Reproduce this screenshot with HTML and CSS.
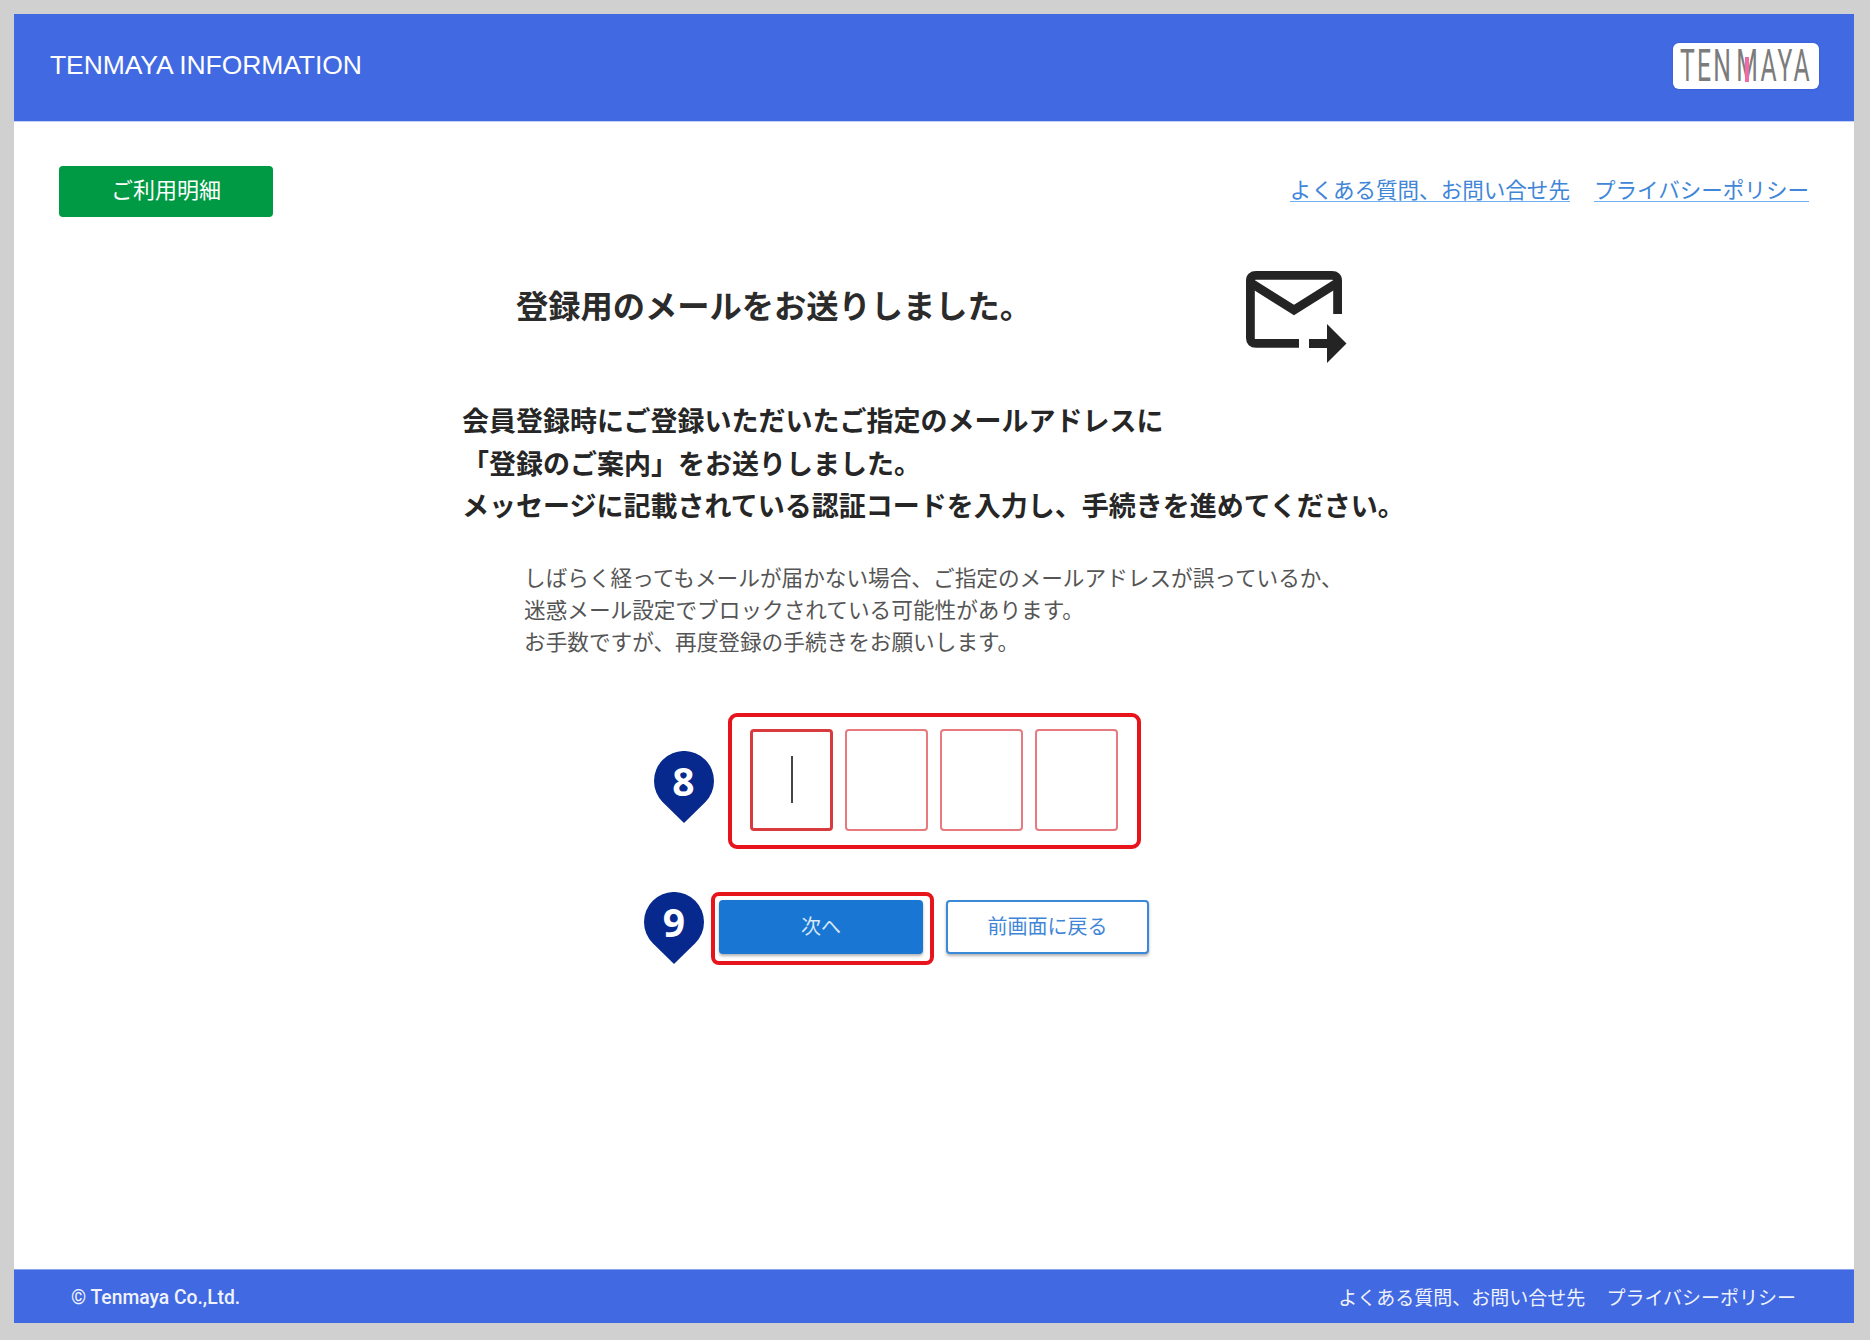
FILE: index.html
```html
<!DOCTYPE html>
<html lang="ja">
<head>
<meta charset="utf-8">
<title>TENMAYA INFORMATION</title>
<link rel="stylesheet" href="styles.css">
</head>
<body>
<div class="page">
  <header class="site-header">
    <div class="site-title">TENMAYA INFORMATION</div>
    <div class="logo"><span class="logo-text">TEN<span class="logo-m">M</span>AYA</span><span class="logo-accent"></span></div>
  </header>
  <main class="main">
    <div class="toolbar">
      <a class="btn-usage">ご利用明細</a>
      <nav class="top-links">
        <a class="top-link">よくある質問、お問い合せ先</a>
        <a class="top-link">プライバシーポリシー</a>
      </nav>
    </div>
    <div class="content">
      <div class="heading-row">
        <h1 class="heading">登録用のメールをお送りしました。</h1>
        <svg class="mail-icon" viewBox="0 0 102 92" aria-hidden="true">
          <path class="mail-stroke" d="M53 72.400H10Q4.400 72.400 4.400 67V9.500Q4.400 4.400 10 4.400H86Q91.600 4.400 91.600 9.500V43"/>
          <path class="mail-stroke" d="M5 12L48 39L91 12"/>
          <path class="mail-fill" d="M63 68H81V53L100.500 72.500L81 92V77H63Z"/>
        </svg>
      </div>
      <div class="lead">
        <p class="lead-line">会員登録時にご登録いただいたご指定のメールアドレスに</p>
        <p class="lead-line">「登録のご案内」をお送りしました。</p>
        <p class="lead-line">メッセージに記載されている認証コードを入力し、手続きを進めてください。</p>
      </div>
      <div class="note">
        <p class="note-line">しばらく経ってもメールが届かない場合、ご指定のメールアドレスが誤っているか、</p>
        <p class="note-line">迷惑メール設定でブロックされている可能性があります。</p>
        <p class="note-line">お手数ですが、再度登録の手続きをお願いします。</p>
      </div>
    </div>
    <div class="code-row">
      <div class="code-frame">
        <div class="pin pin-code">
          <svg class="pin-shape" viewBox="0 0 60 72" aria-hidden="true"><path d="M30 72L8.800 51.200A30 30 0 1 1 51.200 51.200Z"/></svg>
          <span class="pin-num">8</span>
        </div>
        <div class="code-box code-box-active"><span class="caret"></span></div>
        <div class="code-box"></div>
        <div class="code-box"></div>
        <div class="code-box"></div>
      </div>
    </div>
    <div class="actions">
      <div class="next-wrap">
        <div class="pin pin-next">
          <svg class="pin-shape" viewBox="0 0 60 72" aria-hidden="true"><path d="M30 72L8.800 51.200A30 30 0 1 1 51.200 51.200Z"/></svg>
          <span class="pin-num">9</span>
        </div>
        <button class="btn btn-next">次へ</button>
      </div>
      <button class="btn btn-back">前画面に戻る</button>
    </div>
  </main>
  <footer class="site-footer">
    <div class="copyright">© Tenmaya Co.,Ltd.</div>
    <nav class="footer-links">
      <a class="footer-link">よくある質問、お問い合せ先</a>
      <a class="footer-link">プライバシーポリシー</a>
    </nav>
  </footer>
</div>
</body>
</html>
```
FILE: styles.css
```css
* { box-sizing: border-box; }
html, body { margin: 0; height: 100%; }
body {
  background: #d0d0d0;
  font-family: "Noto Sans CJK JP", "Liberation Sans", sans-serif;
  padding: 14px 16px 17px 14px;
  height: 1340px;
  overflow: hidden;
}
p, h1 { margin: 0; }
.page {
  height: 1309px;
  background: #fff;
  display: flex;
  flex-direction: column;
}
.site-header {
  height: 108px;
  flex: none;
  background: #4169e1;
  border-bottom: 1px solid #c5d2f5;
  display: flex;
  align-items: flex-start;
  justify-content: space-between;
  padding: 29px 35px 0 36px;
}
.site-title {
  font-family: "Liberation Sans", Arial, sans-serif;
  font-size: 26.500px;
  line-height: 44px;
  color: #fff;
  letter-spacing: -0.100px;
}
.logo {
  position: relative;
  width: 146px;
  height: 46px;
  background: #fff;
  border-radius: 6px;
  box-shadow: 0 0 2px #2f55d0;
  display: flex;
  justify-content: center;
}
.logo-text {
  flex: none;
  font-family: "Roboto", sans-serif;
  font-weight: 400;
  font-size: 45px;
  line-height: 46px;
  color: #7c7c7c;
  letter-spacing: 4px;
  transform: scaleX(0.55);
  white-space: nowrap;
}
.logo-m { margin-left: 6px; }
.logo-accent {
  position: absolute;
  left: 72px;
  top: 14px;
  width: 4px;
  height: 25px;
  background: #f06aa6;
}
.main {
  flex: 1;
  display: flex;
  flex-direction: column;
}
.toolbar {
  display: flex;
  justify-content: space-between;
  align-items: flex-start;
  padding: 44px 45px 0 45px;
}
.btn-usage {
  width: 214px;
  height: 51px;
  padding-bottom: 8px;
  background: #009a44;
  border-radius: 4px;
  color: #fff;
  font-size: 22px;
  display: flex;
  align-items: center;
  justify-content: center;
}
.top-links { display: flex; gap: 24px; padding-top: 10px; }
.top-link {
  font-size: 21.550px;
  line-height: 25px;
  color: #3f86d8;
  border-bottom: 1px solid #6fb0ee;
}
.content {
  width: 944px;
  margin: 0 auto;
}
.heading-row {
  display: flex;
  align-items: flex-start;
  padding: 54px 0 0 54px;
  height: 182px;
}
.heading {
  width: 730px;
  font-size: 32.250px;
  line-height: 46px;
  font-weight: 700;
  color: #2b2b2b;
  margin-top: 10px;
}
.mail-icon { width: 102px; height: 92px; flex: none; }
.mail-stroke { fill: none; stroke: #242424; stroke-width: 8.800; }
.mail-fill { fill: #242424; }
.lead-line {
  font-size: 27px;
  line-height: 42.500px;
  font-weight: 700;
  color: #262626;
  white-space: nowrap;
}
.note { padding: 34px 0 0 62px; }
.note-line {
  font-size: 21.650px;
  line-height: 32px;
  color: #555;
  white-space: nowrap;
}
.code-row {
  display: flex;
  justify-content: center;
  margin-top: 56px;
}
.code-frame {
  position: relative;
  width: 413px;
  height: 136px;
  border: 4px solid #e8141c;
  border-radius: 9px;
  display: flex;
  gap: 12px;
  padding: 12px 0 0 18px;
}
.code-box {
  width: 83px;
  height: 102px;
  border: 2px solid #e77a7e;
  border-radius: 4px;
  display: flex;
  align-items: center;
  justify-content: center;
}
.code-box-active { border: 3px solid #d83a40; }
.caret { width: 2px; height: 47px; background: #444; margin-left: 2px; }
.pin {
  position: absolute;
  width: 60px;
  height: 72px;
}
.pin-code { left: -78px; top: 34px; }
.pin-next { left: -75px; top: -8px; }
.pin-shape { display: block; width: 60px; height: 72px; fill: #07288c; }
.pin-num {
  position: absolute;
  left: 0;
  top: 0;
  width: 60px;
  height: 60px;
  text-align: center;
  font-family: "Open Sans", sans-serif;
  font-weight: 700;
  font-size: 39px;
  line-height: 60px;
  color: #fff;
}
.actions {
  display: flex;
  justify-content: center;
  gap: 23px;
  margin-top: 51px;
}
.next-wrap { position: relative; width: 204px; height: 54px; }
.next-wrap::after {
  content: "";
  position: absolute;
  inset: -8px -11px -11px -8px;
  border: 4px solid #e8141c;
  border-radius: 8px;
  pointer-events: none;
}
.btn {
  width: 204px;
  height: 54px;
  border-radius: 4px;
  font-family: inherit;
  font-size: 20px;
  padding: 0 0 3px;
  box-shadow: 0 2px 3px rgba(0, 0, 0, 0.3);
}
.btn-next { background: #1976d2; color: #d8e8f8; border: none; }
.btn-back { width: 203px; background: #fff; color: #3f86d8; border: 2px solid #3a8ad8; }
.site-footer {
  height: 54px;
  flex: none;
  background: #4169e1;
  border-top: 1px solid #8aa3ec;
  display: flex;
  align-items: center;
  justify-content: space-between;
  padding: 0 58px 0 57px;
  color: #f0f3fd;
}
.copyright {
  font-family: "Roboto", sans-serif;
  font-weight: 500;
  font-size: 19.300px;
  padding-top: 2px;
}
.footer-links { display: flex; gap: 21px; }
.footer-link { font-size: 19px; line-height: 28px; }
```
